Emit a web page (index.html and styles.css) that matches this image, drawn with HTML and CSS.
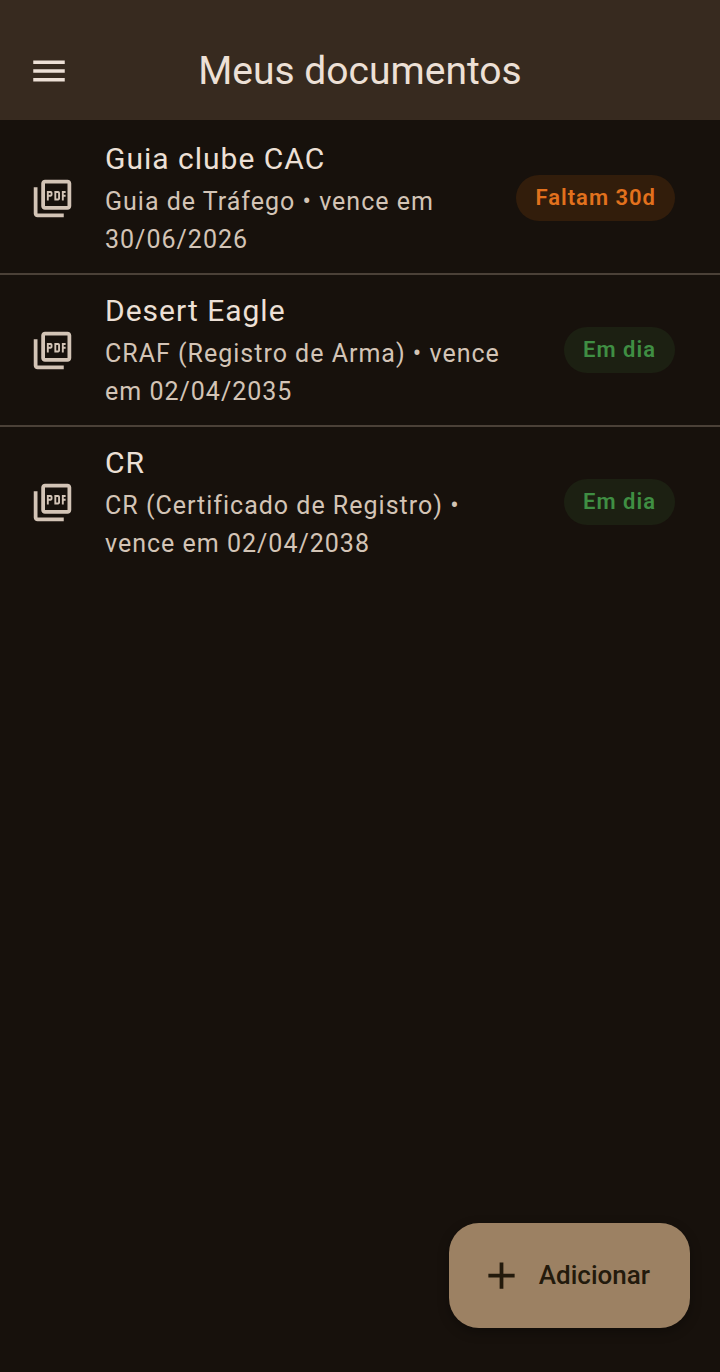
FILE: index.html
```
<!DOCTYPE html>
<html lang="pt-BR">
<head>
    <meta charset="UTF-8">
    <meta name="viewport" content="width=device-width, initial-scale=1.0">
    <title>Meus documentos</title>
    <link rel="stylesheet" href="styles.css">
</head>
<body>
    <header class="app-bar">
        <button type="button" class="menu-button" aria-label="Abrir menu">
            <svg viewBox="0 0 24 24" aria-hidden="true"><path d="M3 18h18v-2H3v2zm0-5h18v-2H3v2zm0-7v2h18V6H3z"/></svg>
        </button>
        <h1>Meus documentos</h1>
    </header>

    <!-- ícone usado em todos os itens -->
    <svg class="sprite" aria-hidden="true">
        <symbol id="icon-pdf" viewBox="0 0 24 24">
            <path d="M20 2H8c-1.1 0-2 .9-2 2v12c0 1.1.9 2 2 2h12c1.1 0 2-.9 2-2V4c0-1.1-.9-2-2-2zm0 14H8V4h12v12zM4 6H2v14c0 1.1.9 2 2 2h14v-2H4V6zm12 6V9c0-.55-.45-1-1-1h-2v5h2c.55 0 1-.45 1-1zm-2-3h1v3h-1V9zm4 2h1v-1h-1V9h1V8h-2v5h1v-2zm-8 0h1c.55 0 1-.45 1-1V9c0-.55-.45-1-1-1H9v5h1v-2zm0-2h1v1h-1V9z"/>
        </symbol>
    </svg>

    <main>
        <ul class="document-list">
            <li class="document">
                <svg class="document-icon" aria-hidden="true"><use href="#icon-pdf"/></svg>
                <div class="document-text">
                    <h2>Guia clube CAC</h2>
                    <p>Guia de Tráfego • vence em 30/06/2026</p>
                </div>
                <span class="badge badge-warning">Faltam 30d</span>
            </li>
            <li class="document">
                <svg class="document-icon" aria-hidden="true"><use href="#icon-pdf"/></svg>
                <div class="document-text">
                    <h2>Desert Eagle</h2>
                    <p>CRAF (Registro de Arma) • vence em 02/04/2035</p>
                </div>
                <span class="badge badge-ok">Em dia</span>
            </li>
            <li class="document">
                <svg class="document-icon" aria-hidden="true"><use href="#icon-pdf"/></svg>
                <div class="document-text">
                    <h2>CR</h2>
                    <p>CR (Certificado de Registro) • vence em 02/04/2038</p>
                </div>
                <span class="badge badge-ok">Em dia</span>
            </li>
        </ul>
    </main>

    <button type="button" class="add-button">
        <svg viewBox="0 0 24 24" aria-hidden="true"><path d="M19 13h-6v6h-2v-6H5v-2h6V5h2v6h6v2z"/></svg>
        Adicionar
    </button>
</body>
</html>
```

FILE: styles.css
```
* {
    box-sizing: border-box;
}
body {
    display: flex;
    flex-direction: column;
    min-height: 100vh;
    margin: 0;
    background-color: #17110C;
    color: #EDE0D6;
    font-family: Roboto, sans-serif;
}
h1, h2, p, ul {
    margin: 0;
    padding: 0;
    font-weight: 400;
}
svg {
    fill: currentColor;
}
button {
    border: none;
    font-family: inherit;
    cursor: pointer;
}
.sprite {
    display: none;
}
.app-bar {
    display: grid;
    grid-template-columns: 42px 1fr 42px;
    align-items: center;
    padding: 45px 28px 23px;
    background-color: #372A1F;
}
.app-bar h1 {
    font-size: 39px;
    line-height: 52px;
    text-align: center;
}
.menu-button {
    display: flex;
    padding: 0;
    background: none;
    color: inherit;
}
.menu-button svg {
    width: 42px;
    height: 42px;
}
.document-list {
    padding-top: 3px;
    list-style: none;
}
.document {
    display: flex;
    align-items: center;
    padding: 14px 45px 14px 30px;
}
.document + .document {
    border-top: 2px solid #4B4138;
}
.document-icon {
    flex: none;
    width: 45px;
    height: 45px;
    margin-right: 30px;
    color: #D3C4B6;
}
.document-text {
    flex: 1;
    margin-right: 30px;
}
.document-text h2 {
    margin-bottom: 2px;
    font-size: 30px;
    line-height: 44px;
    letter-spacing: 1px;
}
.document-text p {
    color: #D3C4B6;
    font-size: 25px;
    line-height: 38px;
    letter-spacing: 1px;
}
.badge {
    flex: none;
    padding: 8px 19px;
    border-radius: 23px;
    font-size: 22px;
    font-weight: 600;
    line-height: 30px;
    letter-spacing: 1px;
}
.badge-warning {
    background-color: #321D0B;
    color: #E2711D;
}
.badge-ok {
    background-color: #1C2012;
    color: #3F8E43;
}
.add-button {
    display: flex;
    align-items: center;
    gap: 15px;
    margin: auto 30px 44px auto;
    padding: 30px 40px 30px 30px;
    border-radius: 30px;
    background-color: #9C8163;
    box-shadow: 0 4px 12px rgba(0, 0, 0, 0.3);
    color: #231A0C;
    font-size: 26px;
    font-weight: 500;
    line-height: 45px;
}
.add-button svg {
    width: 45px;
    height: 45px;
}
```
